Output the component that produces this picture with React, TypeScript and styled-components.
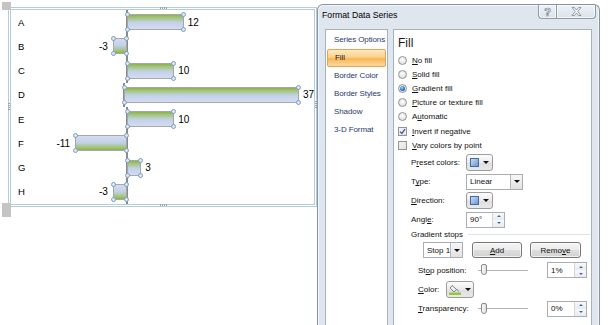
import React from 'react';
import styled, { createGlobalStyle } from 'styled-components';

const GlobalStyle = createGlobalStyle`
  html, body { margin: 0; padding: 0; background: #fff; }
  body { width: 609px; height: 325px; overflow: hidden; font-family: "Liberation Sans", Arial, sans-serif; }
  #root { width: 609px; height: 325px; }
  u { text-decoration: underline; text-underline-offset: 1px; }
`;

const Screen = styled.div`
  display: flex;
  width: 609px;
  height: 325px;
  overflow: hidden;
  background: #fff;
`;

/* ---------------- Chart ---------------- */

const ChartArea = styled.div`
  position: relative;
  flex: none;
  width: 317px;
  padding: 7px 0 0 8px;
  box-sizing: border-box;
`;

const GrayMark = styled.div<{ $top: number; $h: number }>`
  position: absolute;
  left: 2px;
  top: ${(p) => p.$top}px;
  width: 9px;
  height: ${(p) => p.$h}px;
  background: #c4c4c4;
`;

const Grip = styled.div<{ $dir: 'h' | 'v' }>`
  position: absolute;
  ${(p) => (p.$dir === 'h' ? 'width: 8px; height: 2px;' : 'width: 2px; height: 8px;')}
  background-image: repeating-linear-gradient(
    ${(p) => (p.$dir === 'h' ? '90deg' : '0deg')},
    #9aa3ab 0 1px, transparent 1px 2px
  );
`;

const Frame = styled.div`
  width: 309px;
  height: 200px;
  box-sizing: border-box;
  border: 3px double #b5cdd6;
  display: flex;
  flex-direction: column;
`;

const Row = styled.div`
  height: 24.25px;
  display: flex;
  align-items: center;
  flex: none;
`;

const CatLabel = styled.div`
  width: 40px;
  padding-left: 7px;
  box-sizing: border-box;
  font-size: 9.5px;
  color: #000;
`;

const NegSide = styled.div`
  width: 75px;
  display: flex;
  justify-content: flex-end;
  align-items: center;
`;

const PosSide = styled.div`
  flex: 1;
  display: flex;
  align-items: center;
`;

const Axis = styled.div`
  width: 2px;
  align-self: stretch;
  background: #8a8a8a;
  flex: none;
`;

const Bar = styled.div<{ $neg: boolean }>`
  position: relative;
  height: 16px;
  box-sizing: border-box;
  border: 1px solid #a7a7a7;
  flex: none;
  background: linear-gradient(
    ${(p) => (p.$neg ? 'to top' : 'to bottom')},
    #8ab545 0%,
    #a3c377 18%,
    #c2d1e6 52%,
    #d3dcf4 100%
  );
  ${(p) => (p.$neg ? 'margin-right: -1px;' : 'margin-left: -1px;')}
`;

const Handle = styled.span<{ $x: 'l' | 'r'; $y: 't' | 'b' }>`
  position: absolute;
  width: 5px;
  height: 5px;
  box-sizing: border-box;
  border-radius: 50%;
  border: 1px solid #7c9fc2;
  background: #dce7f2;
  ${(p) => (p.$x === 'l' ? 'left: -3px;' : 'right: -3px;')}
  ${(p) => (p.$y === 't' ? 'top: -3px;' : 'bottom: -3px;')}
`;

const Value = styled.span<{ $neg: boolean }>`
  font-size: 10px;
  color: #000;
  ${(p) => (p.$neg ? 'margin-right: 5px;' : 'margin-left: 4px;')}
`;

const SCALE = 4.72;
const data: [string, number][] = [
  ['A', 12],
  ['B', -3],
  ['C', 10],
  ['D', 37],
  ['E', 10],
  ['F', -11],
  ['G', 3],
  ['H', -3],
];

const Handles = () => (
  <>
    <Handle $x="l" $y="t" />
    <Handle $x="r" $y="t" />
    <Handle $x="l" $y="b" />
    <Handle $x="r" $y="b" />
  </>
);

const Chart = () => (
  <ChartArea>
    <Frame>
      {data.map(([cat, v]) => {
        const neg = v < 0;
        const w = Math.abs(v) * SCALE;
        return (
          <Row key={cat}>
            <CatLabel>{cat}</CatLabel>
            <NegSide>
              {neg && (
                <>
                  <Value $neg>{v}</Value>
                  <Bar $neg style={{ width: w }}>
                    <Handles />
                  </Bar>
                </>
              )}
            </NegSide>
            <Axis />
            <PosSide>
              {!neg && (
                <>
                  <Bar $neg={false} style={{ width: w }}>
                    <Handles />
                  </Bar>
                  <Value $neg={false}>{v}</Value>
                </>
              )}
            </PosSide>
          </Row>
        );
      })}
    </Frame>
    <GrayMark $top={2} $h={8} />
    <GrayMark $top={203} $h={14} />
    <Grip $dir="h" style={{ left: 160, top: 7 }} />
    <Grip $dir="h" style={{ left: 160, top: 204 }} />
    <Grip $dir="v" style={{ left: 8, top: 102 }} />
    <Grip $dir="v" style={{ left: 315, top: 100 }} />
  </ChartArea>
);

/* ---------------- Dialog ---------------- */

const Dialog = styled.div`
  flex: none;
  margin-top: 4px;
  width: 283px;
  height: 330px;
  box-sizing: border-box;
  border: 1px solid #8593a4;
  border-bottom: none;
  border-radius: 6px 6px 0 0;
  background: #dfe6ee;
  box-shadow: inset 1px 1px 0 #f3f6f9, inset -1px 0 0 #f3f6f9;
  display: flex;
  flex-direction: column;
  font-size: 8px;
  color: #111;
`;

const TitleBar = styled.div`
  height: 24px;
  display: flex;
  justify-content: space-between;
  align-items: flex-start;
  padding-left: 4px;
  padding-right: 3px;
`;

const Title = styled.div`
  padding-top: 5px;
  font-size: 8.7px;
  line-height: 11px;
  color: #000;
`;

const CaptionButtons = styled.div`
  display: flex;
`;

const CaptionButton = styled.div<{ $w: number; $first?: boolean }>`
  width: ${(p) => p.$w}px;
  height: 14px;
  box-sizing: border-box;
  border: 1px solid #8e9bab;
  border-top: none;
  ${(p) => (p.$first ? 'border-radius: 0 0 0 4px;' : 'border-left: none; border-radius: 0 0 4px 0;')}
  background: linear-gradient(#eef2f6, #dbe2ea);
  box-shadow: inset 0 0 0 1px rgba(255, 255, 255, 0.6);
  display: flex;
  align-items: center;
  justify-content: center;
  font-size: 11px;
  font-weight: bold;
  color: #f2f4f7;
  -webkit-text-stroke: 0.7px #7d8896;
`;

const Body = styled.div`
  flex: 1;
  display: flex;
  gap: 5px;
  padding: 0 7px 0 7px;
`;

const Nav = styled.div`
  width: 63px;
  flex: none;
  box-sizing: border-box;
  background: #fff;
  border: 1px solid #a5b1bf;
  padding-top: 1px;
  display: flex;
  flex-direction: column;
`;

const NavItem = styled.div<{ $active?: boolean }>`
  height: 18px;
  line-height: 18px;
  padding-left: 8px;
  color: #1f3b70;
  box-sizing: border-box;
  white-space: nowrap;
  letter-spacing: -0.1px;
  ${(p) =>
    p.$active &&
    `
    margin: 0 1px;
    padding-left: 7px;
    line-height: 16px;
    color: #1b1b1b;
    border: 1px solid #e3a552;
    border-radius: 2px;
    background: linear-gradient(#fde8c2 0%, #fbd08a 45%, #f8b655 55%, #fcd9a0 100%);
  `}
`;

const Content = styled.div`
  flex: 1;
  box-sizing: border-box;
  background: #fff;
  border: 1px solid #a5b1bf;
  padding-left: 4px;
  display: flex;
  flex-direction: column;
`;

const Heading = styled.div`
  height: 23px;
  padding-top: 4px;
  box-sizing: border-box;
  font-size: 12px;
  line-height: 18px;
  color: #1b1b1b;
`;

const OptionRow = styled.div`
  height: 14.2px;
  display: flex;
  align-items: center;
  gap: 5px;
  flex: none;
`;

const Radio = styled.span<{ $on?: boolean }>`
  width: 9px;
  height: 9px;
  box-sizing: border-box;
  border-radius: 50%;
  border: 1px solid #939393;
  background: radial-gradient(circle at 50% 40%, #ffffff 0%, #e2e2e2 70%, #cfcfcf 100%);
  display: flex;
  align-items: center;
  justify-content: center;
  &::after {
    content: '';
    display: ${(p) => (p.$on ? 'block' : 'none')};
    width: 5px;
    height: 5px;
    border-radius: 50%;
    background: radial-gradient(circle at 40% 35%, #a6e4ff 0%, #2f86cf 45%, #0e3c74 100%);
  }
`;

const Check = styled.span`
  width: 9px;
  height: 9px;
  box-sizing: border-box;
  border: 1px solid #939393;
  background: linear-gradient(135deg, #f4f4f4, #e2e2e2);
  display: flex;
  align-items: center;
  justify-content: center;
`;

const FormRow = styled.div<{ $h: number; $indent: number }>`
  height: ${(p) => p.$h}px;
  padding-left: ${(p) => p.$indent}px;
  display: flex;
  align-items: center;
  flex: none;
`;

const FieldLabel = styled.span<{ $w: number }>`
  width: ${(p) => p.$w}px;
  flex: none;
  white-space: nowrap;
`;

const DropButton = styled.div<{ $w: number }>`
  width: ${(p) => p.$w}px;
  height: 17px;
  box-sizing: border-box;
  border: 1px solid #9c9c9c;
  border-radius: 3px;
  background: linear-gradient(#fdfdfd, #eaeaea 50%, #dedede 51%, #e9e9e9);
  display: flex;
  align-items: center;
  justify-content: center;
  gap: 4px;
`;

const Swatch = styled.span`
  width: 9px;
  height: 9px;
  box-sizing: border-box;
  border: 1px solid #3f6ca8;
  background: linear-gradient(135deg, #cbdcf5, #6e96d0);
`;

const Caret = styled.span`
  width: 0;
  height: 0;
  border-left: 3px solid transparent;
  border-right: 3px solid transparent;
  border-top: 3px solid #111;
`;

const Combo = styled.div<{ $w: number }>`
  width: ${(p) => p.$w}px;
  height: 16px;
  box-sizing: border-box;
  border: 1px solid #abadb3;
  background: #fff;
  display: flex;
  align-items: stretch;
  flex: none;
`;

const ComboText = styled.span`
  flex: 1;
  min-width: 0;
  padding-left: 3px;
  display: flex;
  align-items: center;
  white-space: nowrap;
  overflow: hidden;
`;

const ComboButton = styled.span`
  width: 12px;
  flex: none;
  box-sizing: border-box;
  border-left: 1px solid #b9b9b9;
  background: linear-gradient(#f7f7f7, #e2e2e2);
  display: flex;
  align-items: center;
  justify-content: center;
`;

const SpinArrows = styled.span`
  width: 11px;
  flex: none;
  display: flex;
  flex-direction: column;
  border-left: 1px solid #d6d6d6;
`;

const SpinHalf = styled.span<{ $up?: boolean }>`
  flex: 1;
  display: flex;
  align-items: center;
  justify-content: center;
  background: linear-gradient(#f7f9fb, #e6ebf0);
  &::after {
    content: '';
    border-left: 2px solid transparent;
    border-right: 2px solid transparent;
    ${(p) => (p.$up ? 'border-bottom: 2px solid #4e6a93;' : 'border-top: 2px solid #4e6a93;')}
  }
`;

const SectionRow = styled.div`
  height: 9.5px;
  padding-left: 13px;
  display: flex;
  align-items: center;
  gap: 5px;
  flex: none;
`;

const SectionLine = styled.span`
  flex: 1;
  height: 1px;
  background: #dbe3ea;
  margin-right: 1px;
`;

const PushButton = styled.div<{ $w: number }>`
  width: ${(p) => p.$w}px;
  height: 16px;
  box-sizing: border-box;
  border: 1px solid #767676;
  border-radius: 3px;
  background: linear-gradient(#f4f4f4, #ececec 48%, #dddddd 52%, #d2d2d2);
  box-shadow: inset 0 0 0 1px rgba(255, 255, 255, 0.7);
  display: flex;
  align-items: center;
  justify-content: center;
  flex: none;
`;

const Slider = styled.div`
  position: relative;
  width: 50px;
  height: 14px;
  flex: none;
  display: flex;
  align-items: center;
  &::before {
    content: '';
    flex: 1;
    height: 1px;
    background: #b3b3b3;
  }
`;

const Thumb = styled.span`
  position: absolute;
  left: 3px;
  top: 1px;
  width: 6px;
  height: 11px;
  box-sizing: border-box;
  border: 1px solid #8a8a8a;
  border-radius: 2px 2px 3px 3px;
  background: linear-gradient(90deg, #fafafa, #dedede);
`;

const Spacer = styled.span<{ $w: number }>`
  width: ${(p) => p.$w}px;
  flex: none;
`;

const Spin = ({ value, w }: { value: string; w: number }) => (
  <Combo $w={w}>
    <ComboText>{value}</ComboText>
    <SpinArrows>
      <SpinHalf $up />
      <SpinHalf />
    </SpinArrows>
  </Combo>
);

const CheckMark = () => (
  <svg width="7" height="7" viewBox="0 0 7 7">
    <path d="M1 3.6 L2.8 5.4 L6 1.2" fill="none" stroke="#3b5f9a" strokeWidth="1.3" />
  </svg>
);

const CloseGlyph = () => (
  <svg width="11" height="9" viewBox="0 0 11 9">
    <path
      d="M1 0.5 H3.5 L5.5 3 L7.5 0.5 H10 L6.8 4.5 L10 8.5 H7.5 L5.5 6 L3.5 8.5 H1 L4.2 4.5 Z"
      fill="#f4f6f8"
      stroke="#7d8896"
      strokeWidth="0.8"
    />
  </svg>
);

const BucketIcon = () => (
  <svg width="12" height="11" viewBox="0 0 12 11">
    <path d="M3 1.5 L7.5 5.5 L5 8 L1 4 Z" fill="#f2f2f2" stroke="#555" strokeWidth="0.7" />
    <path d="M7.5 5.5 C9 6 9.5 7 9.5 7.5" fill="none" stroke="#3f79c4" strokeWidth="1" />
    <rect x="0" y="8.5" width="12" height="2.5" fill="#9bc53d" />
  </svg>
);

const FormatDialog = () => (
  <Dialog>
    <TitleBar>
      <Title>Format Data Series</Title>
      <CaptionButtons>
        <CaptionButton $w={19} $first>?</CaptionButton>
        <CaptionButton $w={39}>
          <CloseGlyph />
        </CaptionButton>
      </CaptionButtons>
    </TitleBar>
    <Body>
      <Nav>
        <NavItem>Series Options</NavItem>
        <NavItem $active>Fill</NavItem>
        <NavItem>Border Color</NavItem>
        <NavItem>Border Styles</NavItem>
        <NavItem>Shadow</NavItem>
        <NavItem>3-D Format</NavItem>
      </Nav>
      <Content>
        <Heading>Fill</Heading>
        <OptionRow>
          <Radio />
          <span>
            <u>N</u>o fill
          </span>
        </OptionRow>
        <OptionRow>
          <Radio />
          <span>
            <u>S</u>olid fill
          </span>
        </OptionRow>
        <OptionRow>
          <Radio $on />
          <span>
            <u>G</u>radient fill
          </span>
        </OptionRow>
        <OptionRow>
          <Radio />
          <span>
            <u>P</u>icture or texture fill
          </span>
        </OptionRow>
        <OptionRow>
          <Radio />
          <span>
            A<u>u</u>tomatic
          </span>
        </OptionRow>
        <OptionRow>
          <Check>
            <CheckMark />
          </Check>
          <span>
            <u>I</u>nvert if negative
          </span>
        </OptionRow>
        <OptionRow>
          <Check />
          <span>
            <u>V</u>ary colors by point
          </span>
        </OptionRow>

        <FormRow $h={19} $indent={13} style={{ marginTop: 1 }}>
          <FieldLabel $w={55}>
            P<u>r</u>eset colors:
          </FieldLabel>
          <DropButton $w={27}>
            <Swatch />
            <Caret />
          </DropButton>
        </FormRow>
        <FormRow $h={19} $indent={13}>
          <FieldLabel $w={55}>
            T<u>y</u>pe:
          </FieldLabel>
          <Combo $w={57}>
            <ComboText>Linear</ComboText>
            <ComboButton>
              <Caret />
            </ComboButton>
          </Combo>
        </FormRow>
        <FormRow $h={19} $indent={13}>
          <FieldLabel $w={55}>
            <u>D</u>irection:
          </FieldLabel>
          <DropButton $w={27}>
            <Swatch />
            <Caret />
          </DropButton>
        </FormRow>
        <FormRow $h={19} $indent={13}>
          <FieldLabel $w={55}>
            Angl<u>e</u>:
          </FieldLabel>
          <Spin value="90°" w={39} />
        </FormRow>
        <SectionRow>
          <span>Gradient stops</span>
          <SectionLine />
        </SectionRow>
        <FormRow $h={23} $indent={25}>
          <Combo $w={40}>
            <ComboText>Stop 1</ComboText>
            <ComboButton>
              <Caret />
            </ComboButton>
          </Combo>
          <Spacer $w={9} />
          <PushButton $w={50}>
            <span>
              <u>A</u>dd
            </span>
          </PushButton>
          <Spacer $w={8} />
          <PushButton $w={51}>
            <span>
              Remo<u>v</u>e
            </span>
          </PushButton>
        </FormRow>
        <FormRow $h={17} $indent={20}>
          <FieldLabel $w={60}>
            St<u>o</u>p position:
          </FieldLabel>
          <Slider>
            <Thumb />
          </Slider>
          <Spacer $w={19} />
          <Spin value="1%" w={40} />
        </FormRow>
        <FormRow $h={21} $indent={20}>
          <FieldLabel $w={28}>
            <u>C</u>olor:
          </FieldLabel>
          <DropButton $w={28}>
            <BucketIcon />
            <Caret />
          </DropButton>
        </FormRow>
        <FormRow $h={18} $indent={20}>
          <FieldLabel $w={60}>
            <u>T</u>ransparency:
          </FieldLabel>
          <Slider>
            <Thumb />
          </Slider>
          <Spacer $w={19} />
          <Spin value="0%" w={40} />
        </FormRow>
      </Content>
    </Body>
  </Dialog>
);

export default function App() {
  return (
    <>
      <GlobalStyle />
      <Screen>
        <Chart />
        <FormatDialog />
      </Screen>
    </>
  );
}
